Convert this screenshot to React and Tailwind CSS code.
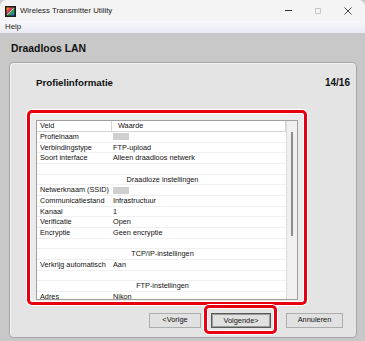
import React from 'react';

const rows = [
  { veld: 'Profielnaam', redacted: true },
  { veld: 'Verbindingstype', waarde: 'FTP-upload' },
  { veld: 'Soort interface', waarde: 'Alleen draadloos netwerk' },
  { empty: true },
  { section: 'Draadloze instellingen' },
  { veld: 'Netwerknaam (SSID)', redacted: true },
  { veld: 'Communicatiestand', waarde: 'Infrastructuur' },
  { veld: 'Kanaal', waarde: '1' },
  { veld: 'Verificatie', waarde: 'Open' },
  { veld: 'Encryptie', waarde: 'Geen encryptie' },
  { empty: true },
  { section: 'TCP/IP-instellingen' },
  { veld: 'Verkrijg automatisch', waarde: 'Aan' },
  { empty: true },
  { section: 'FTP-instellingen' },
  { veld: 'Adres', waarde: 'Nikon' },
];

const AppIcon = () => (
  <svg width="11" height="11" viewBox="0 0 11 11">
    <defs>
      <linearGradient id="ic" x1="0" y1="0" x2="1" y2="1">
        <stop offset="0" stopColor="#f5d000" />
        <stop offset="0.35" stopColor="#e8246a" />
        <stop offset="0.6" stopColor="#2aa84a" />
        <stop offset="1" stopColor="#2060d0" />
      </linearGradient>
    </defs>
    <rect x="0" y="0" width="11" height="11" fill="#1a1a1a" />
    <rect x="1.5" y="1.5" width="8" height="8" fill="url(#ic)" />
    <path d="M2 9 L9 2" stroke="#fff" strokeWidth="0.8" opacity="0.7" />
  </svg>
);

const Button = ({ children, isDefault }) => (
  <div
    className={`h-[15px] flex items-center justify-center bg-[#e1e1e1] text-[7.4px] text-[#111] border ${
      isDefault ? 'border-[#5a5a5a] shadow-[inset_0_0_0_1px_#9a9a9a]' : 'border-[#adadad]'
    }`}
  >
    {children}
  </div>
);

export default function App() {
  return (
    <div
      className="w-[365px] h-[341px] flex flex-col overflow-hidden bg-[#c8c8c8] text-black"
      style={{ fontFamily: '"Liberation Sans", Arial, sans-serif' }}
    >
      {/* Titelbalk */}
      <div className="h-[21px] flex items-center bg-[#f4f4f4] rounded-t-[6px] shrink-0">
        <div className="ml-[5px] mt-[1px]">
          <AppIcon />
        </div>
        <span className="ml-[4px] text-[7.8px] text-[#1b1b1b]">Wireless Transmitter Utility</span>
        <div className="ml-auto flex items-center">
          <div className="w-[7px] h-[1px] bg-[#333] mr-[23px]" />
          <div className="w-[6px] h-[6px] border border-[#c4c4c4] rounded-[1px] mr-[23px]" />
          <svg width="8" height="8" viewBox="0 0 8 8" className="mr-[13px]">
            <path d="M0.5 0.5 L7.5 7.5 M7.5 0.5 L0.5 7.5" stroke="#333" strokeWidth="0.9" />
          </svg>
        </div>
      </div>

      {/* Menubalk */}
      <div className="h-[12px] flex items-center bg-gradient-to-b from-[#f7f8fb] to-[#e8ebf2] shrink-0">
        <span className="ml-[5px] text-[7.8px] text-[#1b1b1b]">Help</span>
      </div>

      {/* Inhoud */}
      <div className="flex-1 flex flex-col">
        <div className="h-[29px] flex items-center pl-[11px] pt-[3px]">
          <span className="text-[10.4px] font-bold text-[#111]">Draadloos LAN</span>
        </div>

        <div className="ml-[9px] w-[348px] h-[276px] bg-[#e4e4e4] border border-[#a6a6a6] rounded-[4px] shadow-[inset_1px_1px_0_#f2f2f2] flex flex-col">
          <div className="h-[47px] flex items-start">
            <span className="ml-[26px] mt-[13px] text-[9.7px] font-bold text-[#111]">Profielinformatie</span>
            <span className="ml-auto mr-[6px] mt-[12px] text-[10px] font-bold text-[#111]">14/16</span>
          </div>

          {/* Rode markering met lijst */}
          <div className="ml-[17px] w-[280px] h-[195px] border-[3px] border-[#e60012] rounded-[5px] shadow-[0_0_0_1px_#ffffff,inset_0_0_0_1px_#ffffff] bg-[#ebebeb] pl-[6px] pt-[7px]">
            <div className="w-[262px] h-[180px] border border-[#a0a0a0] bg-white flex overflow-hidden">
              <div className="w-[249px] flex flex-col overflow-hidden text-[7.3px] text-[#111]">
                <div className="h-[11px] shrink-0 flex border-b border-[#d5d5d5]">
                  <div className="w-[75px] pl-[3px] flex items-center border-r border-[#d5d5d5]">Veld</div>
                  <div className="flex-1 pl-[6px] flex items-center border-r border-[#d5d5d5]">Waarde</div>
                </div>
                {rows.map((r, i) => (
                  <div key={i} className="h-[10.667px] shrink-0 flex items-center border-b border-[#f0f0f0] leading-none">
                    {r.section ? (
                      <div className="flex-1 text-center pl-[2px]">{r.section}</div>
                    ) : (
                      <>
                        <div className="w-[75px] pl-[3px] whitespace-nowrap">{r.veld}</div>
                        <div className="flex-1 pl-[1px] whitespace-nowrap">
                          {r.redacted ? (
                            <div className="w-[16px] h-[7px] bg-[#cfcfcf] blur-[0.6px]" />
                          ) : (
                            r.waarde
                          )}
                        </div>
                      </>
                    )}
                  </div>
                ))}
              </div>
              <div className="flex-1 bg-[#f0f0f0] border-l border-[#dadada] relative">
                <div className="absolute left-[4px] top-[11px] w-[2px] h-[104px] bg-[#8c8c8c]" />
              </div>
            </div>
          </div>

          {/* Knoppen */}
          <div className="flex items-center mt-[0px]">
            <div className="ml-[139px] w-[52px] mt-[1px]">
              <Button>&lt;Vorige</Button>
            </div>
            <div className="ml-[3px] w-[73px] h-[29px] border-[3px] border-[#e60012] rounded-[5px] shadow-[0_0_0_1px_#ffffff,inset_0_0_0_1px_#ffffff] flex items-center pl-[4px] pt-[2px]">
              <div className="w-[60px]">
                <Button isDefault>Volgende&gt;</Button>
              </div>
            </div>
            <div className="ml-[9px] w-[57px] mt-[1px]">
              <Button>Annuleren</Button>
            </div>
          </div>
        </div>
      </div>
    </div>
  );
}
